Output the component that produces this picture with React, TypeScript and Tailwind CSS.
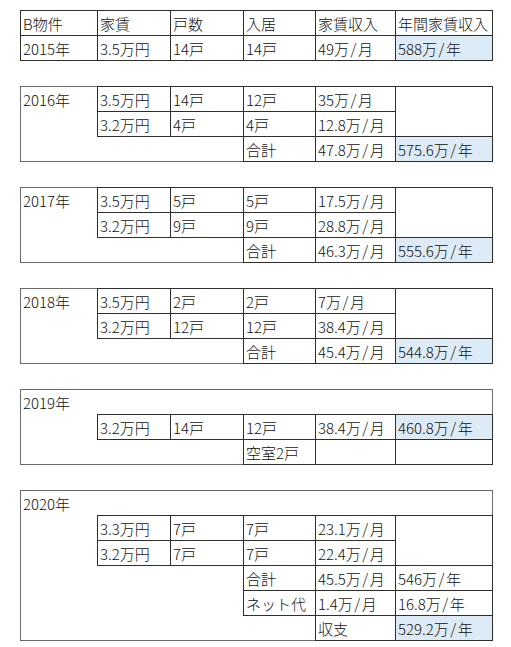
const font = "font-['Noto_Sans_CJK_JP','Noto_Sans',sans-serif]";

const td = "h-[25px] p-0 pl-[2px] align-middle whitespace-nowrap overflow-visible leading-none";
const g = " border border-[#2e2e2e]";
const blue = " bg-[#ddebf7]";

// slash in the sheet font sits a little wider than Noto's
const T = (s: string) => {
  const parts = s.split("/");
  if (parts.length < 2) return s;
  return (
    <>
      {parts[0]}
      <span className="px-[1.5px]">/</span>
      {parts[1]}
    </>
  );
};

const Cols = () => (
  <colgroup>
    <col className="w-[77px]" />
    <col className="w-[73px]" />
    <col className="w-[73px]" />
    <col className="w-[72px]" />
    <col className="w-[80px]" />
    <col className="w-[97px]" />
  </colgroup>
);

type Row = [string, string, string, string];

const YearBlock = ({ year, a, b, sum, total }: { year: string; a: Row; b: Row; sum: string; total: string }) => (
  <table className="table-fixed border-collapse w-[473px] border border-[#6a6a6a]">
    <Cols />
    <tbody>
      <tr>
        <td className={td}>{year}</td>
        {a.map((v, i) => (
          <td key={i} className={td + g}>{T(v)}</td>
        ))}
        <td rowSpan={2} className={td + g}></td>
      </tr>
      <tr>
        <td className={td}></td>
        {b.map((v, i) => (
          <td key={i} className={td + g}>{T(v)}</td>
        ))}
      </tr>
      <tr>
        <td className={td}></td>
        <td colSpan={2} className={td}></td>
        <td className={td + g}>合計</td>
        <td className={td + g}>{T(sum)}</td>
        <td className={td + g + blue}>{T(total)}</td>
      </tr>
    </tbody>
  </table>
);

export default function App() {
  return (
    <div className={`${font} font-light min-h-[647px] bg-white text-[#111] text-[15px] pl-[20px] pt-[10px] flex flex-col gap-[25px]`}>
      <table className="table-fixed border-collapse w-[473px]">
        <Cols />
        <tbody>
          <tr>
            <td className={td + g}>B物件</td>
            <td className={td + g}>家賃</td>
            <td className={td + g}>戸数</td>
            <td className={td + g}>入居</td>
            <td className={td + g}>家賃収入</td>
            <td className={td + g}>年間家賃収入</td>
          </tr>
          <tr>
            <td className={td + g}>2015年</td>
            <td className={td + g}>3.5万円</td>
            <td className={td + g}>14戸</td>
            <td className={td + g}>14戸</td>
            <td className={td + g}>{T("49万/月")}</td>
            <td className={td + g + blue}>{T("588万/年")}</td>
          </tr>
        </tbody>
      </table>

      <YearBlock
        year="2016年"
        a={["3.5万円", "14戸", "12戸", "35万/月"]}
        b={["3.2万円", "4戸", "4戸", "12.8万/月"]}
        sum="47.8万/月"
        total="575.6万/年"
      />
      <YearBlock
        year="2017年"
        a={["3.5万円", "5戸", "5戸", "17.5万/月"]}
        b={["3.2万円", "9戸", "9戸", "28.8万/月"]}
        sum="46.3万/月"
        total="555.6万/年"
      />
      <YearBlock
        year="2018年"
        a={["3.5万円", "2戸", "2戸", "7万/月"]}
        b={["3.2万円", "12戸", "12戸", "38.4万/月"]}
        sum="45.4万/月"
        total="544.8万/年"
      />

      <table className="table-fixed border-collapse w-[473px] border border-[#6a6a6a]">
        <Cols />
        <tbody>
          <tr>
            <td className={td}>2019年</td>
            <td colSpan={5} className={td}></td>
          </tr>
          <tr>
            <td className={td}></td>
            <td className={td + g}>3.2万円</td>
            <td className={td + g}>14戸</td>
            <td className={td + g}>12戸</td>
            <td className={td + g}>{T("38.4万/月")}</td>
            <td className={td + g + blue}>{T("460.8万/年")}</td>
          </tr>
          <tr>
            <td className={td}></td>
            <td colSpan={2} className={td}></td>
            <td className={td + g}>空室2戸</td>
            <td className={td + g}></td>
            <td className={td + g}></td>
          </tr>
        </tbody>
      </table>

      <table className="table-fixed border-collapse w-[473px] border border-[#6a6a6a]">
        <Cols />
        <tbody>
          <tr>
            <td className={td}>2020年</td>
            <td colSpan={5} className={td}></td>
          </tr>
          <tr>
            <td className={td}></td>
            <td className={td + g}>3.3万円</td>
            <td className={td + g}>7戸</td>
            <td className={td + g}>7戸</td>
            <td className={td + g}>{T("23.1万/月")}</td>
            <td rowSpan={2} className={td + g}></td>
          </tr>
          <tr>
            <td className={td}></td>
            <td className={td + g}>3.2万円</td>
            <td className={td + g}>7戸</td>
            <td className={td + g}>7戸</td>
            <td className={td + g}>{T("22.4万/月")}</td>
          </tr>
          <tr>
            <td className={td}></td>
            <td colSpan={2} className={td}></td>
            <td className={td + g}>合計</td>
            <td className={td + g}>{T("45.5万/月")}</td>
            <td className={td + g}>{T("546万/年")}</td>
          </tr>
          <tr>
            <td className={td}></td>
            <td colSpan={2} className={td}></td>
            <td className={td + g}>ネット代</td>
            <td className={td + g}>{T("1.4万/月")}</td>
            <td className={td + g}>{T("16.8万/年")}</td>
          </tr>
          <tr>
            <td className={td}></td>
            <td colSpan={2} className={td}></td>
            <td className={td}></td>
            <td className={td + g}>収支</td>
            <td className={td + g + blue}>{T("529.2万/年")}</td>
          </tr>
        </tbody>
      </table>
    </div>
  );
}
